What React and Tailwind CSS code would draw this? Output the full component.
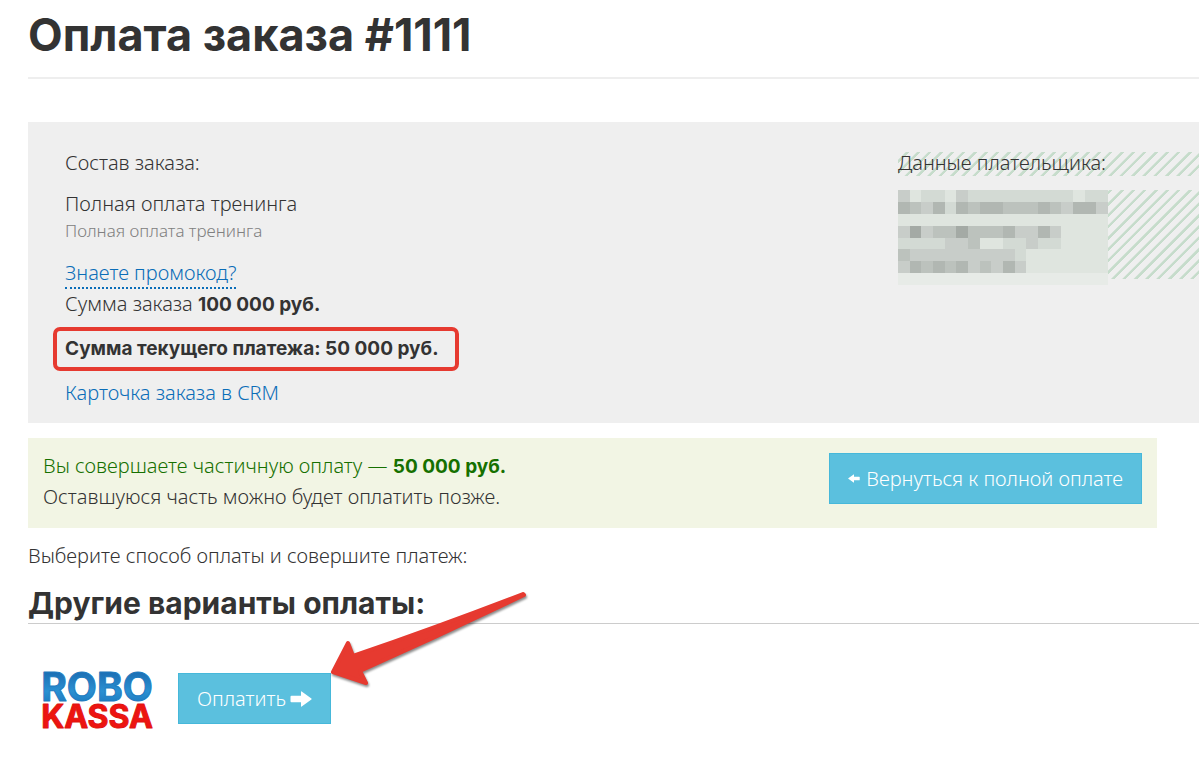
import React from 'react';

const hiddenRows = [
  'b.aa.baaaaaaaaa.aa',
  'dcbdadcddcccdcbddb',
  '..................',
  'bebccecccdbbdb....',
  'aaaabbc..aabaa....',
  'cbbbbbbbbba.......',
  'bdcdcdbcbdb.......',
  'wwwwwwwwwwwwwwwwww',
];

const shades = {
  '.': '#dfe5df',
  a: '#d3dad4',
  b: '#c8cdc9',
  c: '#bcc2bd',
  d: '#b1b7b2',
  e: '#a4aaa5',
  w: '#e7ebe7',
};

const stripes =
  'bg-[repeating-linear-gradient(135deg,#efefef_0px,#efefef_5px,#c6dccb_6px,#c6dccb_8px)]';

const button =
  'flex items-center border border-[#46b8da] bg-[#5bc0de] text-white h-[51px] px-[18px] whitespace-nowrap';

function ArrowGlyph({ className }) {
  return (
    <svg viewBox="0 0 22 16" className={className} fill="currentColor" aria-hidden="true">
      <path d="M1.5 4.8H11V.8Q11 0 11.7.5L21.4 7.4Q22 8 21.4 8.6L11.7 15.5Q11 16 11 15.2V11.2H1.5Q.5 11.2.5 10.2V5.8Q.5 4.8 1.5 4.8Z" />
    </svg>
  );
}

function HiddenData() {
  return (
    <svg
      viewBox="0 0 18 8"
      preserveAspectRatio="none"
      shapeRendering="crispEdges"
      className="block h-[95px] w-[210px]"
      aria-hidden="true"
    >
      {hiddenRows.map((row, y) =>
        row.split('').map((cell, x) => (
          <rect key={`${x}-${y}`} x={x} y={y} width="1" height="1" fill={shades[cell]} />
        ))
      )}
    </svg>
  );
}

function RoboLogo() {
  return (
    <svg viewBox="0 -12 114 86" className="-my-3 h-[86px] w-[114px]" role="img" aria-label="Robokassa">
      <defs>
        <linearGradient id="blue" x1="0" y1="0" x2="0" y2="1">
          <stop offset="0.2" stopColor="#1c6fb4" />
          <stop offset="0.6" stopColor="#2a90d2" />
          <stop offset="0.9" stopColor="#1c78bd" />
        </linearGradient>
      </defs>
      <g fontFamily="Inter, sans-serif" fontWeight="700" strokeLinejoin="round" textAnchor="middle">
        <text x="57" y="30" fontSize="39" fill="url(#blue)" stroke="#1f7cc0" strokeWidth="1">ROBO</text>
        <text x="57" y="57" fontSize="32" fill="#ee1410" stroke="#e01410" strokeWidth="1">KASSA</text>
      </g>
    </svg>
  );
}

function PointerArrow() {
  return (
    <svg
      viewBox="326 588 208 108"
      className="pointer-events-none absolute -top-[85px] left-[148px] h-[108px] w-[208px] max-w-none drop-shadow-[1px_2px_1px_rgba(0,0,0,0.45)]"
      aria-hidden="true"
    >
      <path
        d="M333 672 348 643 353 656Q440 626 523 594L524 595Q443 634 360 671L366 683Z"
        fill="#e63a30"
        stroke="#e63a30"
        strokeWidth="4"
        strokeLinejoin="round"
      />
    </svg>
  );
}

function App() {
  return (
    <div className="overflow-hidden bg-white pl-7 pt-[7px] pb-7 font-['Noto_Sans',sans-serif] text-[20px] leading-[30px] font-light text-[#333]">
      <h1 className="border-b-2 border-[#eee] pb-[14px] font-['Inter',sans-serif] text-[45px] leading-[56px] font-bold">
        Оплата заказа #1111
      </h1>

      {/* Заказ и плательщик */}
      <section className="mt-[43px] flex justify-between bg-[#efefef] pt-[26px] pb-[15px] pl-[37px]">
        <div>
          <p>Состав заказа:</p>
          <p className="mt-[11px]">Полная оплата тренинга</p>
          <p className="text-[17px] leading-6 text-[#808080]">Полная оплата тренинга</p>
          <a href="#promo" className="mt-4 inline-block border-b-2 border-dotted border-[#0a6db8] leading-7 text-[#0a6db8]">
            Знаете промокод?
          </a>
          <p>
            Сумма заказа <b className="font-['Inter',sans-serif] text-[19px] font-bold">100 000 руб.</b>
          </p>
          <p className="-ml-3 mt-[7px] w-fit rounded-[7px] border-4 border-[#e63a30] pr-4 pl-2 font-['Inter',sans-serif] text-[19px] leading-9 font-bold">
            Сумма текущего платежа: 50 000 руб.
          </p>
          <a href="#crm" className="mt-[7px] inline-block text-[#0a6db8]">Карточка заказа в CRM</a>
        </div>
        <div className="w-[301px] shrink-0">
          <p className={`mt-1 h-6 leading-[22px] ${stripes}`}>Данные плательщика:</p>
          <div className={`mt-[14px] h-[89px] ${stripes}`}>
            <HiddenData />
          </div>
        </div>
      </section>

      {/* Частичная оплата */}
      <section className="mt-[15px] mr-[42px] flex items-start justify-between bg-[#f2f5e4] px-[15px] pb-4">
        <div className="pt-[13px]">
          <p className="text-[#167000]">
            Вы совершаете частичную оплату —{' '}
            <b className="font-['Inter',sans-serif] text-[19px] font-bold">50 000 руб.</b>
          </p>
          <p>Оставшуюся часть можно будет оплатить позже.</p>
        </div>
        <button type="button" className={`mt-[15px] gap-[6px] ${button}`}>
          <ArrowGlyph className="h-[9px] w-3 rotate-180" />
          Вернуться к полной оплате
        </button>
      </section>

      <p className="mt-[13px]">Выберите способ оплаты и совершите платеж:</p>

      <h2 className="mt-3 border-b border-[#ccc] font-['Inter',sans-serif] text-[30px] leading-10 font-bold">
        Другие варианты оплаты:
      </h2>

      <div className="mt-[47px] flex items-start gap-6 pl-3">
        <RoboLogo />
        <div className="relative mt-[2px]">
          <button type="button" className={`gap-1 ${button}`}>
            Оплатить
            <ArrowGlyph className="h-4 w-[22px]" />
          </button>
          <PointerArrow />
        </div>
      </div>
    </div>
  );
}

export default App;
